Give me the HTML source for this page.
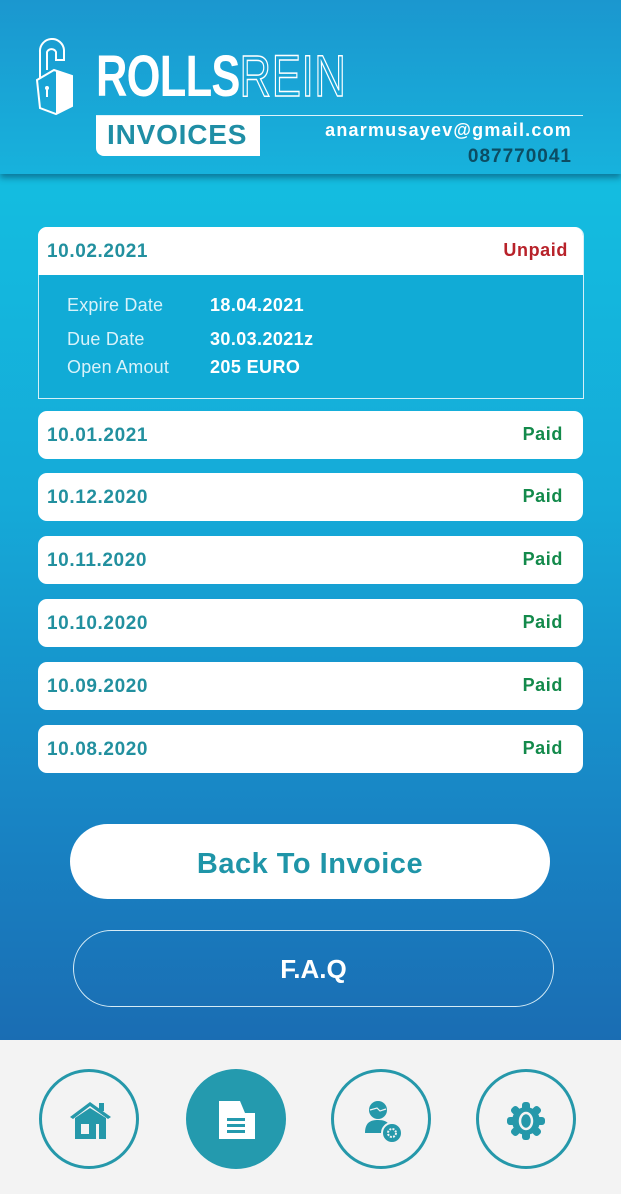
<!DOCTYPE html>
<html><head><style>
*{margin:0;padding:0;box-sizing:border-box}
body{width:621px;height:1194px;position:relative;overflow:hidden;font-family:"Liberation Sans",sans-serif;background:#f3f3f3}
.main{position:absolute;left:0;top:0;width:621px;height:1040px;background:linear-gradient(180deg,#14bde0 175px,#15aad8 500px,#1884c4 820px,#1a6db3 1040px)}
.hdr{position:absolute;left:0;top:0;width:621px;height:174px;background:linear-gradient(180deg,#1b97cf,#17b2dc);box-shadow:0 4px 6px rgba(0,40,70,.45)}
.abs{position:absolute}
.row{position:absolute;left:38px;width:545px;height:48px;background:#fff;border-radius:9px}
.row .d{position:absolute;left:9px;top:14px;font-size:19px;font-weight:bold;color:#22909f;letter-spacing:.6px}
.row .s{position:absolute;right:20px;top:13px;font-size:18px;font-weight:bold;color:#138a4b;letter-spacing:.6px}
.lbl{position:absolute;left:67px;font-size:18px;color:#d8f2fa;letter-spacing:.2px}
.val{position:absolute;left:210px;font-size:18px;font-weight:bold;color:#fff;letter-spacing:.4px}
.circ{position:absolute;top:1069px;width:100px;height:100px;border:3px solid #2598aa;border-radius:50%}
</style></head><body>
<div class="main"></div>
<div class="hdr">
 <svg class="abs" style="left:34px;top:38px" width="40" height="80" viewBox="0 0 40 80">
  <path d="M6 40 V14 A12 12 0 0 1 30 12 V22 H22 V14 A5 5 0 0 0 13 14 V32" fill="none" stroke="#fff" stroke-width="2"/>
  <path d="M3 42 L20 32 L38 38 V68 L22 76 L6 70 Z" fill="none" stroke="#fff" stroke-width="2"/>
  <path d="M22 32 L38 38 V68 L22 76 Z" fill="#fff"/>
  <circle cx="13" cy="50" r="2" fill="#fff"/><rect x="12" y="51" width="2" height="8" fill="#fff"/>
 </svg>
 <div class="abs" style="left:96px;top:48px;font-size:58px;font-weight:bold;color:#fff;letter-spacing:-1px;transform:scaleX(.75);transform-origin:left;line-height:58px">ROLLS<span style="color:transparent;-webkit-text-stroke:1.5px #fff;font-weight:normal;letter-spacing:1px">REIN</span></div>
 <div class="abs" style="left:96px;top:115px;width:487px;height:1px;background:#dff3fb"></div>
 <div class="abs" style="left:96px;top:116px;width:164px;height:40px;background:#fff;border-radius:0 0 0 8px"></div>
 <div class="abs" style="left:107px;top:119px;font-size:28px;font-weight:bold;color:#1f8ea5;letter-spacing:.8px">INVOICES</div>
 <div class="abs" style="right:49px;top:120px;font-size:18px;font-weight:bold;color:#fff;letter-spacing:1.2px">anarmusayev@gmail.com</div>
 <div class="abs" style="right:49px;top:146px;font-size:19px;font-weight:bold;color:#0c4d63;letter-spacing:1px">087770041</div>
</div>

<div class="abs" style="left:38px;top:227px;width:546px;height:172px;border:1px solid #d5f0f8;border-radius:9px 9px 0 0;background:#11abd6"></div>
<div class="row" style="top:227px;border-radius:9px 9px 0 0"><span class="d">10.02.2021</span><span class="s" style="color:#b8222a;right:15px">Unpaid</span></div>
<div class="lbl" style="top:295px">Expire Date</div><div class="val" style="top:295px">18.04.2021</div>
<div class="lbl" style="top:329px">Due Date</div><div class="val" style="top:329px">30.03.2021z</div>
<div class="lbl" style="top:357px">Open Amout</div><div class="val" style="top:357px">205 EURO</div>

<div class="row" style="top:411px"><span class="d">10.01.2021</span><span class="s">Paid</span></div>
<div class="row" style="top:473px"><span class="d">10.12.2020</span><span class="s">Paid</span></div>
<div class="row" style="top:536px"><span class="d">10.11.2020</span><span class="s">Paid</span></div>
<div class="row" style="top:599px"><span class="d">10.10.2020</span><span class="s">Paid</span></div>
<div class="row" style="top:662px"><span class="d">10.09.2020</span><span class="s">Paid</span></div>
<div class="row" style="top:725px"><span class="d">10.08.2020</span><span class="s">Paid</span></div>

<div class="abs" style="left:70px;top:824px;width:480px;height:75px;background:#fff;border-radius:38px;text-align:center;line-height:80px;font-size:29px;font-weight:bold;color:#1f95a8;letter-spacing:.5px">Back To Invoice</div>
<div class="abs" style="left:73px;top:930px;width:481px;height:77px;border:1px solid #d6ecf6;border-radius:39px;text-align:center;line-height:77px;font-size:26px;font-weight:bold;color:#fff">F.A.Q</div>

<div class="circ" style="left:39px"></div>
<div class="circ" style="left:186px;background:#249aae;border:none"></div>
<div class="circ" style="left:331px"></div>
<div class="circ" style="left:476px"></div>
<svg class="abs" style="left:68px;top:1100px" width="45" height="40" viewBox="0 0 45 40">
 <path d="M2 17 L22 2 L43 17 L40 19 L22 6 L5 19 Z" fill="#2598aa"/><rect x="31" y="3" width="5" height="8" fill="#2598aa"/>
 <rect x="7" y="18" width="31" height="21" fill="#2598aa"/><path d="M7 18 L22 8 L38 18 Z" fill="#2598aa"/>
 <rect x="13" y="24" width="8" height="10" fill="#f3f3f3"/><rect x="28" y="24" width="3" height="15" fill="#f3f3f3"/>
</svg>
<svg class="abs" style="left:219px;top:1101px" width="38" height="40" viewBox="0 0 38 40">
 <path d="M0 0 H21 L26 12 H36 V38 H0 Z" fill="#fff"/>
 <rect x="8" y="17" width="18" height="3" fill="#249aae"/><rect x="8" y="23" width="18" height="3" fill="#249aae"/><rect x="8" y="29" width="18" height="3" fill="#249aae"/>
</svg>
<svg class="abs" style="left:363px;top:1100px" width="42" height="45" viewBox="0 0 42 45">
 <circle cx="15" cy="10" r="9" fill="#2598aa"/><path d="M7 10 L14 8 L17 11 L23 9" stroke="#f3f3f3" stroke-width="1.2" fill="none"/>
 <path d="M2 33 C2 22 8 20 15 20 C22 20 28 22 28 33 Z" fill="#2598aa"/>
 <circle cx="29" cy="33" r="10" fill="#2598aa" stroke="#f3f3f3" stroke-width="2"/>
 <circle cx="29" cy="33" r="4" fill="none" stroke="#f3f3f3" stroke-width="2" stroke-dasharray="2 1.2"/>
</svg>
<svg class="abs" style="left:506px;top:1101px" width="40" height="40" viewBox="0 0 40 40">
 <g fill="#2598aa"><circle cx="20" cy="20" r="14"/>
 <rect x="16" y="1" width="8" height="38" rx="3"/><rect x="1" y="16" width="38" height="8" rx="3"/>
 <rect x="16" y="1" width="8" height="38" rx="3" transform="rotate(45 20 20)"/><rect x="16" y="1" width="8" height="38" rx="3" transform="rotate(-45 20 20)"/></g>
 <ellipse cx="20" cy="20" rx="6" ry="8" fill="none" stroke="#f3f3f3" stroke-width="2.5"/>
</svg>
</body></html>
